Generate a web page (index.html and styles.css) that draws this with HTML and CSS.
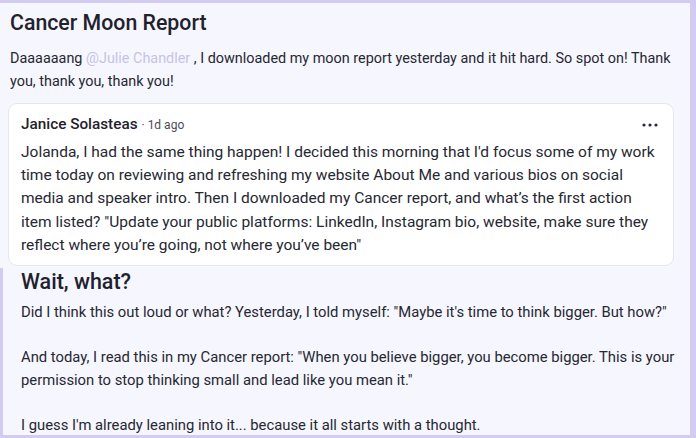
FILE: index.html
```html
<!DOCTYPE html>
<html>
<head>
<meta charset="utf-8">
<link rel="stylesheet" href="styles.css">
</head>
<body>
<div class="page">
  <section class="post">
    <h1 class="title">Cancer Moon Report</h1>
    <p class="text">Daaaaaang <span class="mention">@Julie Chandler</span> , I downloaded my moon report yesterday and it hit hard. So spot on! Thank you, thank you, thank you!</p>
    <div class="reply">
      <div class="reply-head">
        <span class="author">Janice Solasteas</span>
        <span class="meta">· 1d ago</span>
        <svg class="more" width="16" height="4" viewBox="0 0 16 4"><circle cx="2" cy="2" r="1.6"/><circle cx="8" cy="2" r="1.6"/><circle cx="14" cy="2" r="1.6"/></svg>
      </div>
      <p class="reply-text">Jolanda, I had the same thing happen! I decided this morning that I'd focus some of my work time today on reviewing and refreshing my website About Me and various bios on social media and speaker intro. Then I downloaded my Cancer report, and what’s the first action item listed? "Update your public platforms: LinkedIn, Instagram bio, website, make sure they reflect where you’re going, not where you’ve been"</p>
    </div>
  </section>
  <section class="post2">
    <h2 class="title2">Wait, what?</h2>
    <p class="body2">Did I think this out loud or what? Yesterday, I told myself: "Maybe it's time to think bigger. But how?"</p>
    <p class="body2">And today, I read this in my Cancer report: "When you believe bigger, you become bigger. This is your permission to stop thinking small and lead like you mean it."</p>
    <p class="body2">I guess I'm already leaning into it... because it all starts with a thought.</p>
  </section>
</div>
</body>
</html>
```
FILE: styles.css
```css
html, body {
  margin: 0;
  padding: 0;
}
body {
  width: 696px;
  height: 438px;
  overflow: hidden;
  background: #d3cbf2;
  font-family: Roboto, "Liberation Sans", sans-serif;
  color: #262832;
}
.page {
  display: flex;
  flex-direction: column;
}
.post {
  margin: 3px 6px 0 0;
  padding: 0 16px 0 8px;
  background: #f6f6fe;
  height: 265px;
  box-sizing: border-box;
}
.title {
  margin: 0;
  padding: 4px 0 0 2px;
  font-size: 21.3px;
  line-height: 32px;
  font-weight: 500;
  color: #1f222c;
}
.text {
  margin: 0;
  padding: 8px 0 0 2px;
  font-size: 14.4px;
  line-height: 23px;
}
.mention {
  color: #c6c3e6;
}
.reply {
  margin-top: 10px;
  background: #ffffff;
  border: 1px solid #e6e6ef;
  border-radius: 9px;
  padding: 9px 12px 8px 12px;
}
.reply-head {
  display: flex;
  align-items: baseline;
  gap: 4px;
  line-height: 23px;
  margin-bottom: 4px;
}
.author {
  font-size: 15.3px;
  font-weight: 500;
  color: #1f222c;
}
.meta {
  font-size: 12px;
  color: #4b4d57;
}
.more {
  margin-left: auto;
  margin-right: 3px;
  align-self: center;
  fill: #2a2c35;
}
.reply-text {
  margin: 0;
  font-size: 15.5px;
  line-height: 23.2px;
}
.post2 {
  margin: 0 6px 0 3px;
  padding: 0 10px 0 18px;
  background: #f6f6fe;
  height: 167px;
  box-sizing: border-box;
  overflow: hidden;
}
.title2 {
  margin: 0 0 5px 0;
  font-size: 21.5px;
  line-height: 28px;
  font-weight: 500;
  color: #1f222c;
}
.body2 {
  margin: 0 0 22.5px 0;
  font-size: 14.8px;
  line-height: 22.5px;
}
```
